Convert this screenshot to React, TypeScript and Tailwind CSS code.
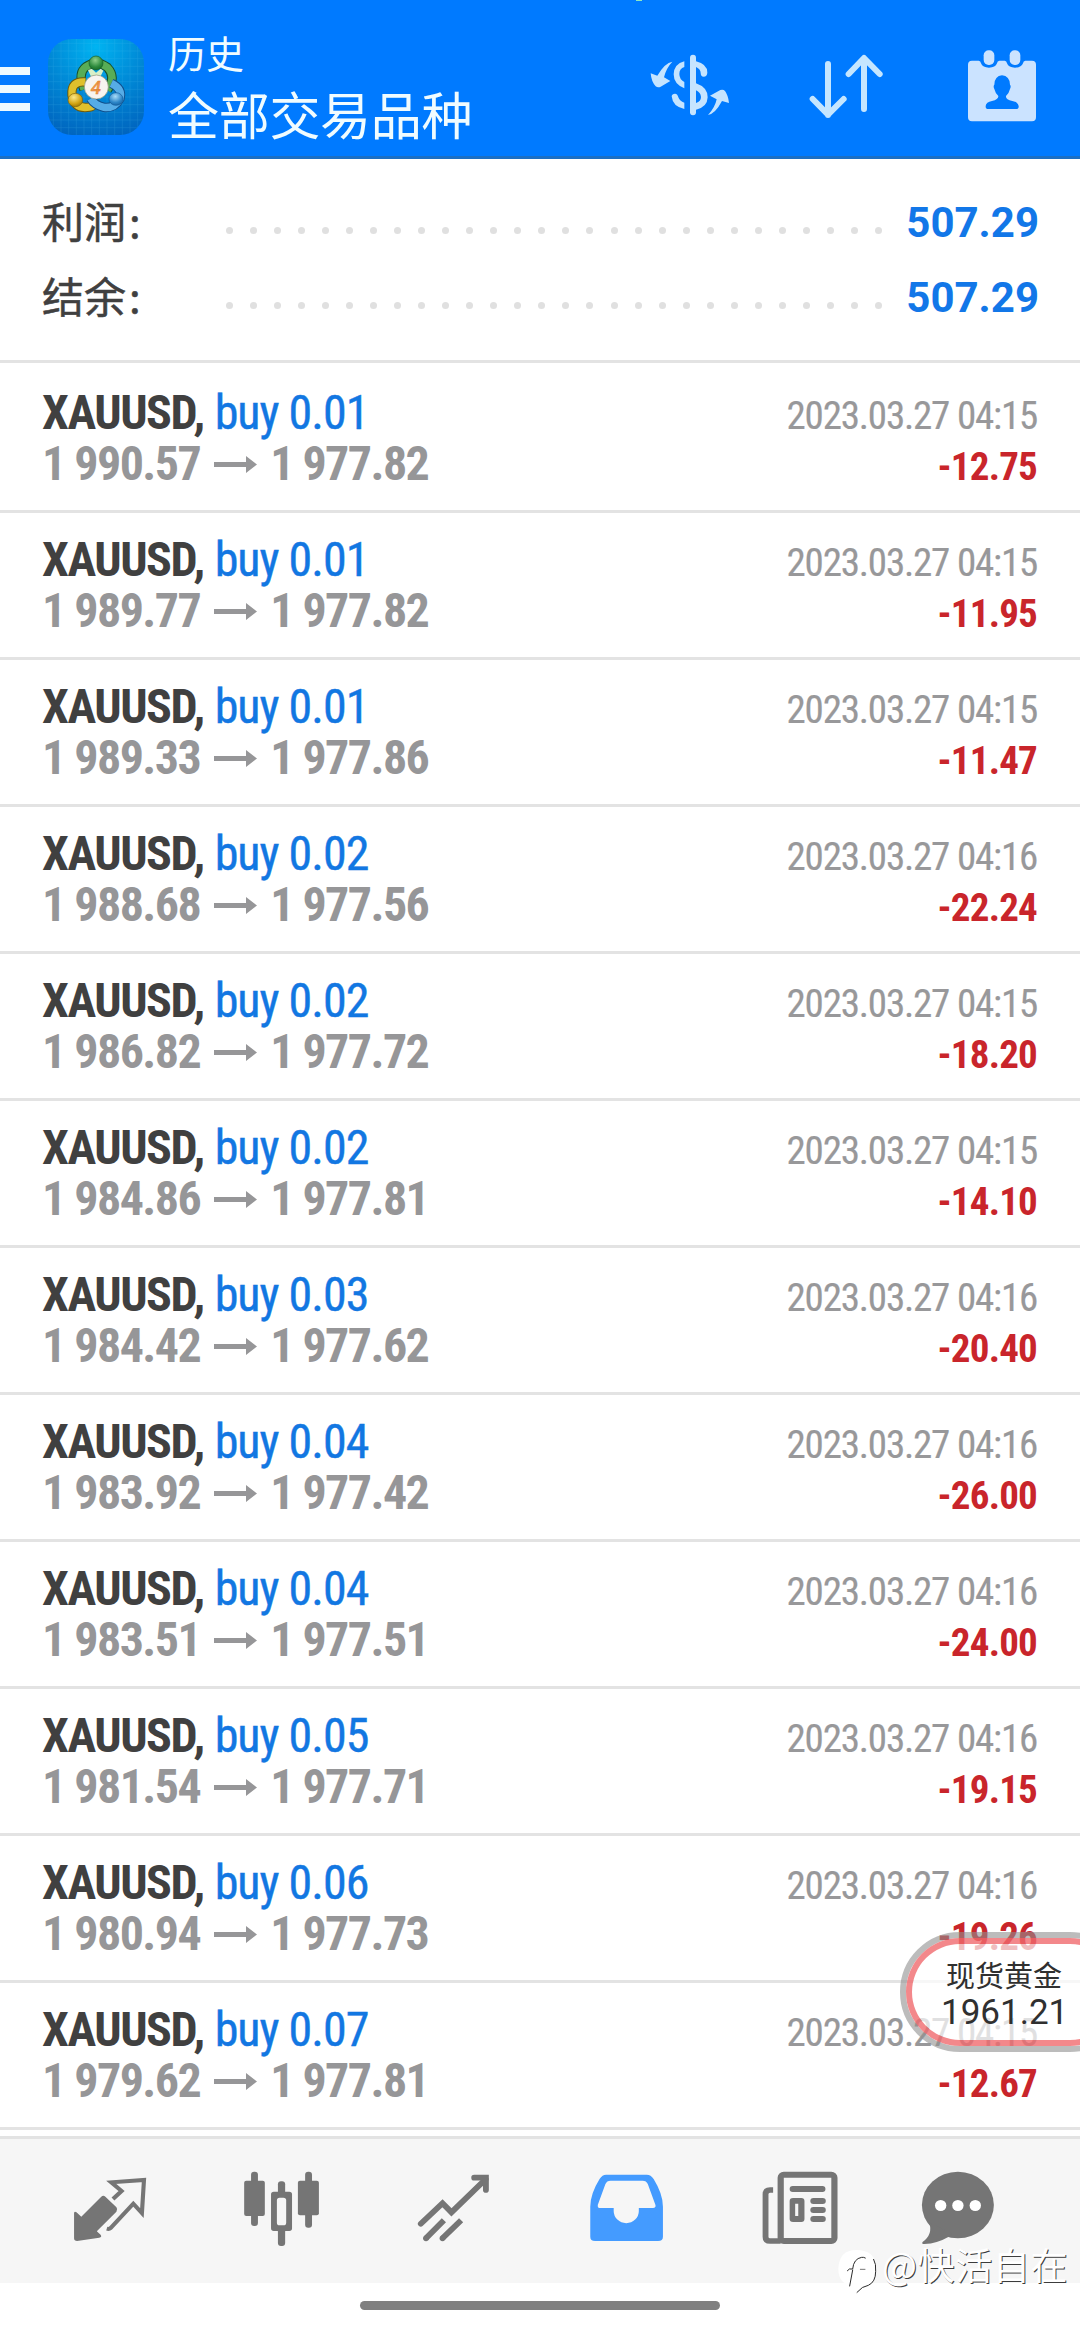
import type { ReactNode } from "react";

const CJK = "font-['Noto_Sans_CJK_SC',sans-serif]";
const COND = "font-['Roboto_Condensed','Roboto',sans-serif]";

type Deal = { lot: string; open: string; close: string; time: string; profit: string };

const deals: Deal[] = [
  { lot: "0.01", open: "1 990.57", close: "1 977.82", time: "2023.03.27 04:15", profit: "-12.75" },
  { lot: "0.01", open: "1 989.77", close: "1 977.82", time: "2023.03.27 04:15", profit: "-11.95" },
  { lot: "0.01", open: "1 989.33", close: "1 977.86", time: "2023.03.27 04:15", profit: "-11.47" },
  { lot: "0.02", open: "1 988.68", close: "1 977.56", time: "2023.03.27 04:16", profit: "-22.24" },
  { lot: "0.02", open: "1 986.82", close: "1 977.72", time: "2023.03.27 04:15", profit: "-18.20" },
  { lot: "0.02", open: "1 984.86", close: "1 977.81", time: "2023.03.27 04:15", profit: "-14.10" },
  { lot: "0.03", open: "1 984.42", close: "1 977.62", time: "2023.03.27 04:16", profit: "-20.40" },
  { lot: "0.04", open: "1 983.92", close: "1 977.42", time: "2023.03.27 04:16", profit: "-26.00" },
  { lot: "0.04", open: "1 983.51", close: "1 977.51", time: "2023.03.27 04:16", profit: "-24.00" },
  { lot: "0.05", open: "1 981.54", close: "1 977.71", time: "2023.03.27 04:16", profit: "-19.15" },
  { lot: "0.06", open: "1 980.94", close: "1 977.73", time: "2023.03.27 04:16", profit: "-19.26" },
  { lot: "0.07", open: "1 979.62", close: "1 977.81", time: "2023.03.27 04:15", profit: "-12.67" },
];

function AppLogo() {
  const grid = [160, 183, 206, 229, 252, 275, 298, 321, 344, 367, 390, 413];
  return (
    <svg className="ml-[18px] mt-[39px] h-24 w-24 shrink-0 rounded-[24px]" viewBox="144 57 288 288">
      <defs>
        <radialGradient id="bg" cx="0.5" cy="0.08" r="1">
          <stop offset="0" stopColor="#00b4f2" />
          <stop offset="0.45" stopColor="#008cd8" />
          <stop offset="1" stopColor="#0062bd" />
        </radialGradient>
        <radialGradient id="green" cx="0.45" cy="0.3" r="0.8">
          <stop offset="0" stopColor="#8fd08a" />
          <stop offset="0.6" stopColor="#2c8a3c" />
          <stop offset="1" stopColor="#14601f" />
        </radialGradient>
        <radialGradient id="yellow" cx="0.4" cy="0.3" r="0.8">
          <stop offset="0" stopColor="#fbe98a" />
          <stop offset="0.6" stopColor="#d2a514" />
          <stop offset="1" stopColor="#8f6c06" />
        </radialGradient>
        <radialGradient id="blue" cx="0.45" cy="0.3" r="0.8">
          <stop offset="0" stopColor="#a8dcf8" />
          <stop offset="0.6" stopColor="#2d86c8" />
          <stop offset="1" stopColor="#125a9a" />
        </radialGradient>
      </defs>
      <rect x="144" y="57" width="288" height="288" fill="url(#bg)" />
      <g stroke="#5cc4f0" strokeWidth="1.5" opacity="0.28">
        {grid.map((x) => (
          <path key={x} d={`M${x} 57V345M144 ${x - 90}H432`} />
        ))}
      </g>
      <g fill="none">
        <path d="M252 208Q232 160 258 140Q290 118 322 142Q350 172 322 210" stroke="#17502a" strokeWidth="28" />
        <path d="M252 208Q232 160 258 140Q290 118 322 142Q350 172 322 210" stroke="#58ad56" strokeWidth="22" />
        <path d="M256 186Q212 182 216 226Q224 266 262 262Q284 262 284 240" stroke="#6d5a0c" strokeWidth="28" />
        <path d="M256 186Q212 182 216 226Q224 266 262 262Q284 262 284 240" stroke="#dfc02c" strokeWidth="22" />
        <path d="M334 190Q368 206 360 236Q344 266 312 262Q284 256 272 236" stroke="#104f8c" strokeWidth="28" />
        <path d="M334 190Q368 206 360 236Q344 266 312 262Q284 256 272 236" stroke="#56ace6" strokeWidth="22" />
      </g>
      <path d="M264 150L276 146L288 158L302 146L310 152L298 176H276Z" fill="#d8f0c8" />
      <circle cx="288" cy="129" r="21" fill="url(#green)" stroke="#17602a" strokeWidth="2" />
      <ellipse cx="226" cy="240" rx="22" ry="20" fill="url(#yellow)" stroke="#80640a" strokeWidth="2" />
      <ellipse cx="348" cy="237" rx="21" ry="19" fill="url(#blue)" stroke="#145c9c" strokeWidth="2" />
      <circle cx="289" cy="201" r="36" fill="#f7f4f0" stroke="#8b8f74" strokeWidth="2" />
      <text
        x="288"
        y="221"
        textAnchor="middle"
        fontFamily="Roboto, sans-serif"
        fontSize="56"
        fontWeight="500"
        fontStyle="italic"
        fill="#f39a4a"
        stroke="#d9772c"
        strokeWidth="1"
      >
        4
      </text>
    </svg>
  );
}

function CurrencyIcon() {
  return (
    <svg className="h-[72px] w-20" viewBox="150 150 240 216" fill="#c5e4ff">
      <rect x="270" y="164" width="18" height="182" rx="9" />
      <path d="M253 184V201Q238 206 238 222Q238 238 253 246V265Q221 252 221 223Q222 192 253 184Z" />
      <path d="M288 184Q322 192 322 218Q321 230 311 230Q302 230 302 219Q302 207 288 201Z" />
      <path d="M288 250Q323 262 323 292Q322 322 288 329V309Q303 305 303 291Q302 277 288 271Z" />
      <path d="M215 289Q216 281 225 281Q233 282 235 292Q239 304 253 308V327Q218 320 215 289Z" />
      <path d="M217 185Q195 188 172 227L152 220Q154 245 167 259Q174 264 182 260L211 243L192 232Q198 205 217 185Z" />
      <path d="M324 345Q346 341 366 303L387 309Q385 287 375 273Q370 267 361 270L330 287L350 298Q345 323 324 345Z" />
    </svg>
  );
}

function SortIcon() {
  return (
    <svg
      className="ml-[78px] h-[72px] w-[76px]"
      viewBox="624 150 228 216"
      fill="none"
      stroke="#c5e6ff"
      strokeWidth="18"
      strokeLinecap="round"
      strokeLinejoin="round"
    >
      <path d="M684 192V345M638 297L684 344L731 297" />
      <path d="M792 327V175M746 222L792 174L839 222" />
    </svg>
  );
}

function CalendarIcon() {
  return (
    <svg className="ml-[82px] h-[72px] w-[72px]" viewBox="1098 150 216 216" fill="#cbe3ff">
      <rect x="1151" y="151" width="32" height="44" rx="15" />
      <rect x="1229" y="151" width="32" height="44" rx="15" />
      <path
        fillRule="evenodd"
        d="M1116 182H1136Q1142 182 1143 190Q1148 203 1167 203Q1186 203 1191 190Q1192 182 1198 182H1214Q1220 182 1221 190Q1226 203 1245 203Q1264 203 1269 190Q1270 182 1276 182H1296Q1308 182 1308 194V352Q1308 364 1296 364H1116Q1104 364 1104 352V194Q1104 182 1116 182Z
        M1206 226Q1184 228 1183 254Q1179 258 1183 267Q1186 280 1195 288Q1196 299 1176 303Q1158 306 1157 318V320Q1157 327 1165 327H1248Q1256 327 1256 320V318Q1255 306 1237 303Q1216 299 1218 288Q1227 280 1230 267Q1234 258 1230 254Q1229 228 1206 226Z"
      />
    </svg>
  );
}

function Header() {
  return (
    <header className="relative flex h-[159px] items-start border-b-[3px] border-[#1b6fc4] bg-[#007aff] text-white">
      <span className="absolute left-[636px] top-0 h-px w-1.5 bg-[#8fe8c0]" />
      <div className="mt-[67px] flex w-[30px] shrink-0 flex-col gap-[10px]">
        <span className="h-2 bg-[#ecfaff]" />
        <span className="h-2 bg-[#ecfaff]" />
        <span className="h-2 bg-[#ecfaff]" />
      </div>
      <AppLogo />
      <div className={`ml-6 flex-1 whitespace-nowrap pt-7 text-[#f0fcff] ${CJK}`}>
        <div className="text-[38px] leading-[48px]">历史</div>
        <div className="mt-[5px] text-[51px] leading-[64px] tracking-[-0.3px]">全部交易品种</div>
      </div>
      <div className="mr-[42px] mt-[50px] flex shrink-0">
        <CurrencyIcon />
        <SortIcon />
        <CalendarIcon />
      </div>
    </header>
  );
}

function SummaryRow({ label, value }: { label: string; value: string }) {
  return (
    <div className="flex h-[75px] items-start pl-[42px] pr-[41px]">
      <div className={`w-[184px] text-[42px] leading-[75px] text-[#404040] [-webkit-text-stroke:0.5px_#404040] ${CJK}`}>
        {label}
        <span className="ml-[3px]">:</span>
      </div>
      <div className="mt-[45px] flex w-[656px] justify-between">
        {Array.from({ length: 28 }, (_, i) => (
          <span key={i} className="h-[7px] w-[7px] rounded-full bg-[#e0e0e0]" />
        ))}
      </div>
      <div className="flex-1 text-right font-['Roboto',sans-serif] text-[42px] font-bold leading-[81px] text-[#1277e8]">
        {value}
      </div>
    </div>
  );
}

function DealRow({ deal }: { deal: Deal }) {
  return (
    <li className={`flex h-[147px] justify-between whitespace-nowrap border-b-[3px] border-[#e3e3e3] pl-[42px] pr-[43px] ${COND}`}>
      <div className="pt-[21px] text-[48px] leading-[51px]">
        <div className="flex">
          <span className="font-bold tracking-[-1.45px] text-[#404040]">XAUUSD,</span>
          <span className="ml-[11px] tracking-[-1px] text-[#1277e2] [-webkit-text-stroke:0.4px_#1277e2]">
            buy {deal.lot}
          </span>
        </div>
        <div className="flex items-center font-bold tracking-[-1.55px] text-[#969698]">
          <span>{deal.open}</span>
          <svg className="ml-[14px] mr-[13px] mt-px h-[17px] w-[43px]" viewBox="0 0 43 17" fill="#969698">
            <path d="M0 6H32V0L43 8.5L32 17V11H0Z" />
          </svg>
          <span>{deal.close}</span>
        </div>
      </div>
      <div className="pt-[25px] text-right text-[39px] leading-[51px]">
        <div className="tracking-[-1.2px] text-[#98989a] [-webkit-text-stroke:0.2px_#98989a]">{deal.time}</div>
        <div className="font-bold tracking-[-0.8px] text-[#c9252b]">{deal.profit}</div>
      </div>
    </li>
  );
}

function TabIcon({ viewBox, children }: { viewBox: string; children: ReactNode }) {
  return (
    <div className="flex w-[172px] justify-center">
      <svg
        className="mt-[31px] h-[77px] w-[86px] overflow-visible"
        viewBox={viewBox}
        preserveAspectRatio="none"
        fill="#757575"
      >
        {children}
      </svg>
    </div>
  );
}

function TabBar() {
  return (
    <nav className="mt-1.5 flex h-[147px] border-t-[3px] border-[#e3e3e3] bg-[#f6f6f6] pl-6">
      <TabIcon viewBox="194.5 180 249.7 231">
        <path d="M294 260Q300 255 306 260L338 292Q343 299 338 305L281 364L292 374Q297 381 288 383L224 393Q215 393 215 385V309Q216 303 222 307L236 320Z" />
        <path
          d="M328 267L353 243L323 217L418 210L412 309L387 281L321 354Q317 358 310 356"
          fill="none"
          stroke="#757575"
          strokeWidth="12"
        />
      </TabIcon>
      <TabIcon viewBox="694 180 249.7 231">
        <rect x="729" y="185" width="20" height="163" rx="9" />
        <rect x="709" y="212" width="60" height="106" rx="6" />
        <rect x="807" y="214" width="21" height="40" rx="9" />
        <rect x="807" y="355" width="21" height="53" rx="9" />
        <path
          fillRule="evenodd"
          d="M795 245H840Q848 245 848 253V355Q848 363 840 363H795Q787 363 787 355V253Q787 245 795 245ZM812 263Q804 263 804 271V338Q804 346 812 346H823Q831 346 831 338V271Q831 263 823 263Z"
        />
        <rect x="886" y="185" width="20" height="168" rx="9" />
        <rect x="865" y="212" width="61" height="104" rx="6" />
      </TabIcon>
      <TabIcon viewBox="1193.5 180 249.7 231">
        <g fill="none" stroke="#757575" strokeWidth="17">
          <path strokeLinecap="round" d="M1222 341L1285 280L1311 307L1410 208" />
          <path strokeLinecap="round" d="M1377 203H1411V240" />
          <path d="M1237 385L1289 331M1285 385L1339 331" />
        </g>
        <circle cx="1237" cy="385" r="8.5" />
        <circle cx="1285" cy="385" r="8.5" />
      </TabIcon>
      <TabIcon viewBox="124.9 180 249.7 231">
        <path
          fill="#449bff"
          fillRule="evenodd"
          d="M192 194H310Q322 194 330 207Q357 252 357 290V380Q357 393 343 393H160Q146 393 146 380V290Q146 252 173 207Q181 194 192 194Z
          M205 212Q194 212 190 222L168 284Q166 294 175 294H214V303A36.500 36.500 0 0 0 287 303V294H328Q338 293 335 284L313 222Q309 212 298 212Z"
        />
      </TabIcon>
      <TabIcon viewBox="624.4 180 249.7 231">
        <path
          d="M677 240H668Q655 240 655 253V380Q655 393 668 393H699"
          fill="none"
          stroke="#757575"
          strokeWidth="17"
        />
        <rect x="699" y="194.500" width="156" height="198.500" rx="9" fill="none" stroke="#757575" strokeWidth="18" />
        <rect x="725" y="228" width="104" height="18" rx="9" />
        <path
          fillRule="evenodd"
          d="M735 264H759Q768 264 768 273V327Q768 336 759 336H735Q725 336 725 327V273Q725 264 735 264ZM741 281V318H750V281Z"
        />
        <rect x="785" y="264" width="45" height="18" rx="9" />
        <rect x="785" y="291" width="45" height="18" rx="9" />
        <rect x="785" y="318" width="45" height="18" rx="9" />
      </TabIcon>
      <TabIcon viewBox="1123.8 180 249.7 231">
        <ellipse cx="1213.500" cy="285" rx="104.500" ry="99.500" />
        <path d="M1130 338Q1142 372 1111 396Q1107 402 1116 402Q1154 400 1187 380L1196 370Z" />
        <g fill="#fff">
          <circle cx="1163.500" cy="286.500" r="16.500" />
          <circle cx="1213.500" cy="286.500" r="16.500" />
          <circle cx="1264" cy="286.500" r="16.500" />
        </g>
      </TabIcon>
    </nav>
  );
}

/* Floating quote bubble docked to the screen's right edge. */
function QuoteBubble() {
  return (
    <div className="absolute left-[900px] top-[1932px] h-[120px] w-[230px] rounded-full border-[6px] border-[#8f8f8f]/60">
      <div className="h-full rounded-full border-[6px] border-[#f06a6e]/80 bg-white/70 bg-clip-padding pl-[29px] pt-2 text-[#303030]">
        <div className={`pl-[5px] text-[29px] leading-[44px] ${CJK}`}>现货黄金</div>
        <div className="-mt-[3px] font-['Roboto',sans-serif] text-[35px] leading-10">1961.21</div>
      </div>
    </div>
  );
}

function Watermark() {
  return (
    <div className="absolute left-[838px] top-[2236px] flex">
      <svg className="mt-[13px] h-[45px] w-[42px]" viewBox="27 27 126 135" fill="none">
        <path d="M82 30Q140 30 142 84Q142 128 112 136L84 158L92 140Q28 142 28 86Q30 30 82 30Z" fill="#fff" />
        <g stroke="#2b2b2b" strokeWidth="3" strokeLinecap="round">
          <path d="M55 92Q60 84 71 87Q74 56 98 52Q104 51 109 54M71 90L62 138" />
          <path d="M134 58Q142 72 140 94Q140 126 118 136Q100 138 84 157" />
          <path d="M94 88H108" stroke="#777" />
        </g>
      </svg>
      <span
        className={`ml-[2px] whitespace-nowrap text-[37px] leading-[56px] tracking-[0.6px] text-white [text-shadow:1px_1px_0_#3c3c3c] ${CJK}`}
      >
        @快活自在
      </span>
    </div>
  );
}

export default function App() {
  return (
    <div className="relative h-[2330px] w-[1080px] overflow-hidden bg-white">
      <Header />
      <section className="mb-[3px] border-b-[3px] border-[#e3e3e3] pb-7 pt-[23px]">
        <SummaryRow label="利润" value="507.29" />
        <SummaryRow label="结余" value="507.29" />
      </section>
      <ul>
        {deals.map((deal, i) => (
          <DealRow key={i} deal={deal} />
        ))}
      </ul>
      <TabBar />
      <div className="mx-auto mt-[18px] h-[9px] w-[360px] rounded-full bg-[#808080]" />
      <QuoteBubble />
      <Watermark />
    </div>
  );
}
